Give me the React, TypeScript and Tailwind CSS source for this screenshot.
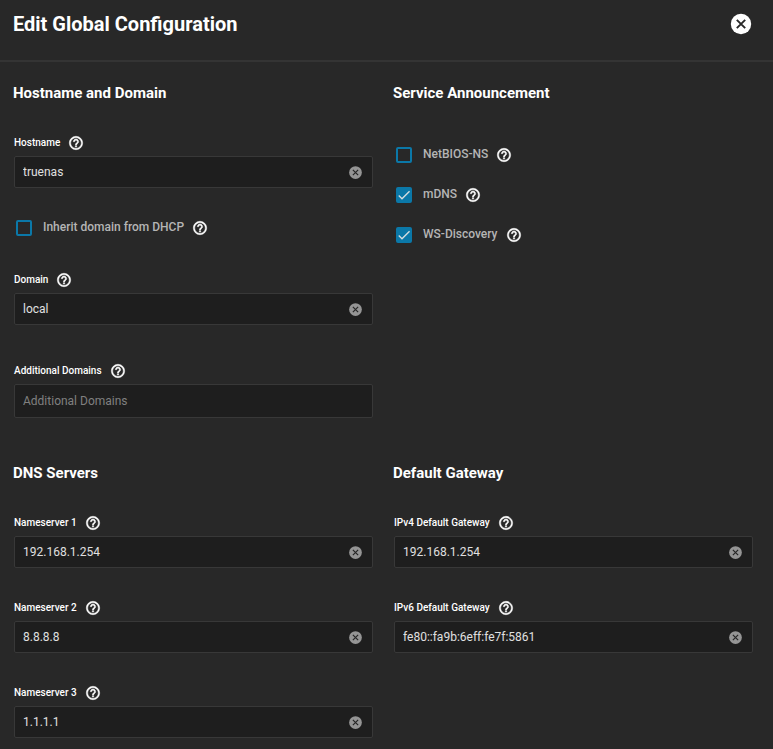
import { useId, useState } from 'react';
import { MdCheck } from 'react-icons/md';

function CircleX({ size }: { size: number }) {
  return (
    <svg width={size} height={size} viewBox="0 0 24 24" aria-hidden="true">
      <circle cx="12" cy="12" r="10.2" fill="currentColor" />
      <path d="M7.8 7.8 16.2 16.2M16.2 7.8 7.8 16.2" stroke="#282828" strokeWidth="1.9" />
    </svg>
  );
}

function Help({ topic }: { topic: string }) {
  return (
    <button type="button" aria-label={`Help: ${topic}`} className="shrink-0 text-white">
      <svg width="16" height="16" viewBox="0 0 24 24" aria-hidden="true">
        <path
          fill="currentColor"
          stroke="currentColor"
          strokeWidth="0.7"
          d="M11 18h2v-2h-2v2zm1-16C6.48 2 2 6.48 2 12s4.48 10 10 10 10-4.48 10-10S17.52 2 12 2zm0 18c-4.41 0-8-3.59-8-8s3.59-8 8-8 8 3.59 8 8-3.59 8-8 8zm0-14c-2.21 0-4 1.79-4 4h2c0-1.1.9-2 2-2s2 .9 2 2c0 2-3 1.75-3 5h2c0-2.25 3-2.5 3-5 0-2.21-1.79-4-4-4z"
        />
      </svg>
    </button>
  );
}

interface FieldProps {
  label: string;
  initial?: string;
  placeholder?: string;
}

function Field({ label, initial = '', placeholder }: FieldProps) {
  const id = useId();
  const [value, setValue] = useState(initial);
  return (
    <div>
      <div className="flex h-4 items-center gap-2">
        <label htmlFor={id} className="text-[10px] leading-4 font-medium text-white">
          {label}
        </label>
        <Help topic={label} />
      </div>
      <div
        className={`mt-[5px] flex items-center rounded-xs border border-[#383838] bg-[#1e1e1e] pr-[9px] pl-2 ${
          placeholder ? 'h-[34px]' : 'h-8'
        }`}
      >
        <input
          id={id}
          type="text"
          value={value}
          placeholder={placeholder}
          onChange={(e) => setValue(e.target.value)}
          className="min-w-0 flex-1 bg-transparent text-xs text-[#e0e0e0] outline-none placeholder:text-[#808080]"
        />
        {value && (
          <button type="button" aria-label={`Clear ${label}`} onClick={() => setValue('')} className="text-[#959595]">
            <CircleX size={15} />
          </button>
        )}
      </div>
    </div>
  );
}

function Check({ label, initial = false }: { label: string; initial?: boolean }) {
  const id = useId();
  const [checked, setChecked] = useState(initial);
  return (
    <div className="flex h-4 items-center pl-0.5">
      <span className="grid size-4 shrink-0 place-items-center">
        <input
          id={id}
          type="checkbox"
          checked={checked}
          onChange={(e) => setChecked(e.target.checked)}
          className="col-start-1 row-start-1 size-4 appearance-none rounded-xs border-2 border-[#0b78a8] checked:bg-[#0b78a8]"
        />
        {checked && <MdCheck size={16} className="pointer-events-none col-start-1 row-start-1 text-[#d5dde0]" />}
      </span>
      <label htmlFor={id} className="mr-2 ml-[11px] pb-0.5 text-xs font-medium text-[#b5b5b5]">
        {label}
      </label>
      <Help topic={label} />
    </div>
  );
}

function Heading({ children }: { children: string }) {
  return <legend className="-ml-px mb-[30px] text-[15px] leading-6 font-bold text-white">{children}</legend>;
}

export default function App() {
  return (
    <div className="min-h-screen bg-[#282828] pb-2.5 font-['Roboto','Liberation_Sans',sans-serif] text-white">
      <header className="flex h-[62px] justify-between border-b-2 border-[#343434] pt-3 pr-5 pl-[13px]">
        <h1 className="text-[20px] leading-6 font-bold">Edit Global Configuration</h1>
        <button type="button" aria-label="Close" className="h-6 text-white">
          <CircleX size={24} />
        </button>
      </header>
      <form className="grid grid-cols-2 gap-x-[21px] gap-y-[43px] pt-[19px] pr-5 pl-3.5">
        <fieldset className="min-w-0">
          <Heading>Hostname and Domain</Heading>
          <div className="flex flex-col gap-8">
            <Field label="Hostname" initial="truenas" />
            <div className="pb-1">
              <Check label="Inherit domain from DHCP" />
            </div>
            <Field label="Domain" initial="local" />
            <div className="pt-1.5">
              <Field label="Additional Domains" placeholder="Additional Domains" />
            </div>
          </div>
        </fieldset>
        <fieldset className="min-w-0">
          <Heading>Service Announcement</Heading>
          <div className="flex flex-col gap-6 pt-3">
            <Check label="NetBIOS-NS" />
            <Check label="mDNS" initial />
            <Check label="WS-Discovery" initial />
          </div>
        </fieldset>
        <fieldset className="min-w-0">
          <Heading>DNS Servers</Heading>
          <div className="flex flex-col gap-8">
            <Field label="Nameserver 1" initial="192.168.1.254" />
            <Field label="Nameserver 2" initial="8.8.8.8" />
            <Field label="Nameserver 3" initial="1.1.1.1" />
          </div>
        </fieldset>
        <fieldset className="min-w-0">
          <Heading>Default Gateway</Heading>
          <div className="flex flex-col gap-8">
            <Field label="IPv4 Default Gateway" initial="192.168.1.254" />
            <Field label="IPv6 Default Gateway" initial="fe80::fa9b:6eff:fe7f:5861" />
          </div>
        </fieldset>
      </form>
    </div>
  );
}
